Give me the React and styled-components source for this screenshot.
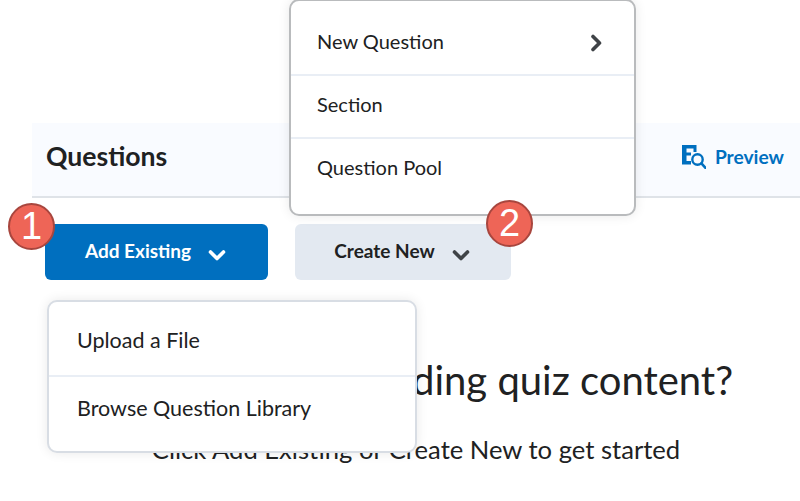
import styled, { createGlobalStyle } from "styled-components"

const GlobalStyle = createGlobalStyle`
    html, body {
        margin: 0;
        padding: 0;
        background: #fff;
        font-family: Lato, "Open Sans", sans-serif;
        color: #202122;
    }
`;

const Page = styled.div`
    position: relative;
    width: 800px;
    height: 501px;
    overflow: hidden;
    padding: 123px 0 0 32px;
    box-sizing: border-box;
`;

const Header = styled.header`
    height: 75px;
    box-sizing: border-box;
    padding: 0 16px 8px 14px;
    display: flex;
    align-items: center;
    justify-content: space-between;
    background: #f9fbff;
    border-bottom: 2px solid #dfe3e8;
`;

const Title = styled.h1`
    margin: 0;
    font-size: 26.6px;
    font-weight: 700;
    color: #202122;
`;

const PreviewLink = styled.a`
    display: flex;
    align-items: center;
    gap: 9px;
    margin-top: 2px;
    font-size: 19.2px;
    font-weight: 700;
    color: #006fbf;
`;

const Toolbar = styled.div`
    display: flex;
    gap: 27px;
    margin: 26px 0 0 13px;
`;

const ButtonWrap = styled.div`
    position: relative;
`;

const DropButton = styled.button`
    display: flex;
    align-items: center;
    justify-content: center;
    gap: 17px;
    width: ${(p) => p.$width}px;
    height: 56px;
    padding: 0 2px 4px 0;
    border: 0;
    border-radius: 6px;
    font-family: inherit;
    font-size: 19px;
    font-weight: 700;
    color: ${(p) => (p.$primary ? "#fff" : "#202122")};
    background: ${(p) => (p.$primary ? "#006fbf" : "#e3e9f1")};
`;

const Menu = styled.ul`
    position: absolute;
    z-index: 2;
    left: ${(p) => p.$left}px;
    top: ${(p) => p.$top}px;
    width: ${(p) => p.$width}px;
    height: ${(p) => p.$height}px;
    margin: 0;
    padding: ${(p) => p.$pad}px 0 0;
    box-sizing: border-box;
    list-style: none;
    background: #fff;
    border: 2px solid ${(p) => p.$border};
    border-radius: 10px;
    box-shadow: 0 0 12px rgba(0, 0, 0, 0.09);
`;

const MenuItem = styled.li`
    display: flex;
    align-items: center;
    justify-content: space-between;
    height: ${(p) => p.$height}px;
    padding: 0 ${(p) => p.$inset}px 5px;
    box-sizing: border-box;
    font-size: ${(p) => p.$size}px;
    color: #202122;
    border-bottom: 2px solid ${(p) => (p.$last ? "transparent" : "#e9eef5")};
`;

const Badge = styled.span`
    position: absolute;
    z-index: 3;
    left: ${(p) => p.$left}px;
    top: ${(p) => p.$top}px;
    width: 47px;
    height: 47px;
    display: flex;
    align-items: center;
    justify-content: center;
    box-sizing: border-box;
    border-radius: 50%;
    background: #ee6557;
    border: 2px solid #a8463e;
    font-family: "Liberation Sans", Arial, sans-serif;
    font-size: 38px;
    color: #fff;
`;

const Empty = styled.section`
    margin-top: 76px;
    text-align: center;
    width: 768px;
`;

const Heading = styled.h2`
    margin: 0;
    padding-left: 16px;
    font-size: 40px;
    font-weight: 400;
    color: #202122;
    white-space: nowrap;
`;

const Hint = styled.p`
    margin: 30px 0 0;
    font-size: 25.6px;
    color: #202122;
`;

const DownIcon = styled.svg`
    margin-top: 10px;
`;

const RightIcon = styled.svg`
    margin: 3px 3px 0 0;
`;

const ChevronDown = ({ color }) => (
    <DownIcon width="18" height="18" viewBox="0 0 18 18">
        <path d="M2.5 6l6.5 6.5L15.5 6" fill="none" stroke={color} strokeWidth="3.6" strokeLinecap="round" strokeLinejoin="round" />
    </DownIcon>
);

const ChevronRight = ({ color }) => (
    <RightIcon width="18" height="18" viewBox="0 0 18 18">
        <path d="M6 2.5l6.5 6.5L6 15.5" fill="none" stroke={color} strokeWidth="3.6" strokeLinecap="round" strokeLinejoin="round" />
    </RightIcon>
);

const PreviewIcon = () => (
    <svg width="24" height="24" viewBox="0 0 24 24">
        <path d="M0 0h14.5v7h-3V3.5H4.5V7.5H9v3H4.5v5.5H9v3.5H0z" fill="#006fbf" />
        <circle cx="15.5" cy="14.5" r="5.2" fill="none" stroke="#006fbf" strokeWidth="2.4" />
        <path d="M19.4 18.4l4.1 4.6" stroke="#006fbf" strokeWidth="2.6" strokeLinecap="round" />
    </svg>
);

export default function App() {
    return (
        <Page>
            <GlobalStyle />
            <Header>
                <Title>Questions</Title>
                <PreviewLink><PreviewIcon />Preview</PreviewLink>
            </Header>
            <Toolbar>
                <ButtonWrap>
                    <DropButton $primary $width={223}>
                        Add Existing <ChevronDown color="#fff" />
                    </DropButton>
                    <Badge $left={-37} $top={-21}>1</Badge>
                    <Menu $left={2} $top={76} $width={370} $height={153} $pad={8} $border="#d8dde4">
                        <MenuItem $height={67} $inset={28} $size={21.5}>Upload a File</MenuItem>
                        <MenuItem $height={69} $inset={28} $size={21.5} $last>Browse Question Library</MenuItem>
                    </Menu>
                </ButtonWrap>
                <ButtonWrap>
                    <DropButton $width={216}>
                        Create New <ChevronDown color="#3f4347" />
                    </DropButton>
                    <Badge $left={191} $top={-24}>2</Badge>
                    <Menu $left={-6} $top={-225} $width={347} $height={217} $pad={12} $border="#b9bbbd">
                        <MenuItem $height={63} $inset={26} $size={20}>New Question <ChevronRight color="#3f4347" /></MenuItem>
                        <MenuItem $height={63} $inset={26} $size={20}>Section</MenuItem>
                        <MenuItem $height={63} $inset={26} $size={20} $last>Question Pool</MenuItem>
                    </Menu>
                </ButtonWrap>
            </Toolbar>
            <Empty>
                <Heading>Ready to start adding quiz content?</Heading>
                <Hint>Click Add Existing or Create New to get started</Hint>
            </Empty>
        </Page>
    )
}
